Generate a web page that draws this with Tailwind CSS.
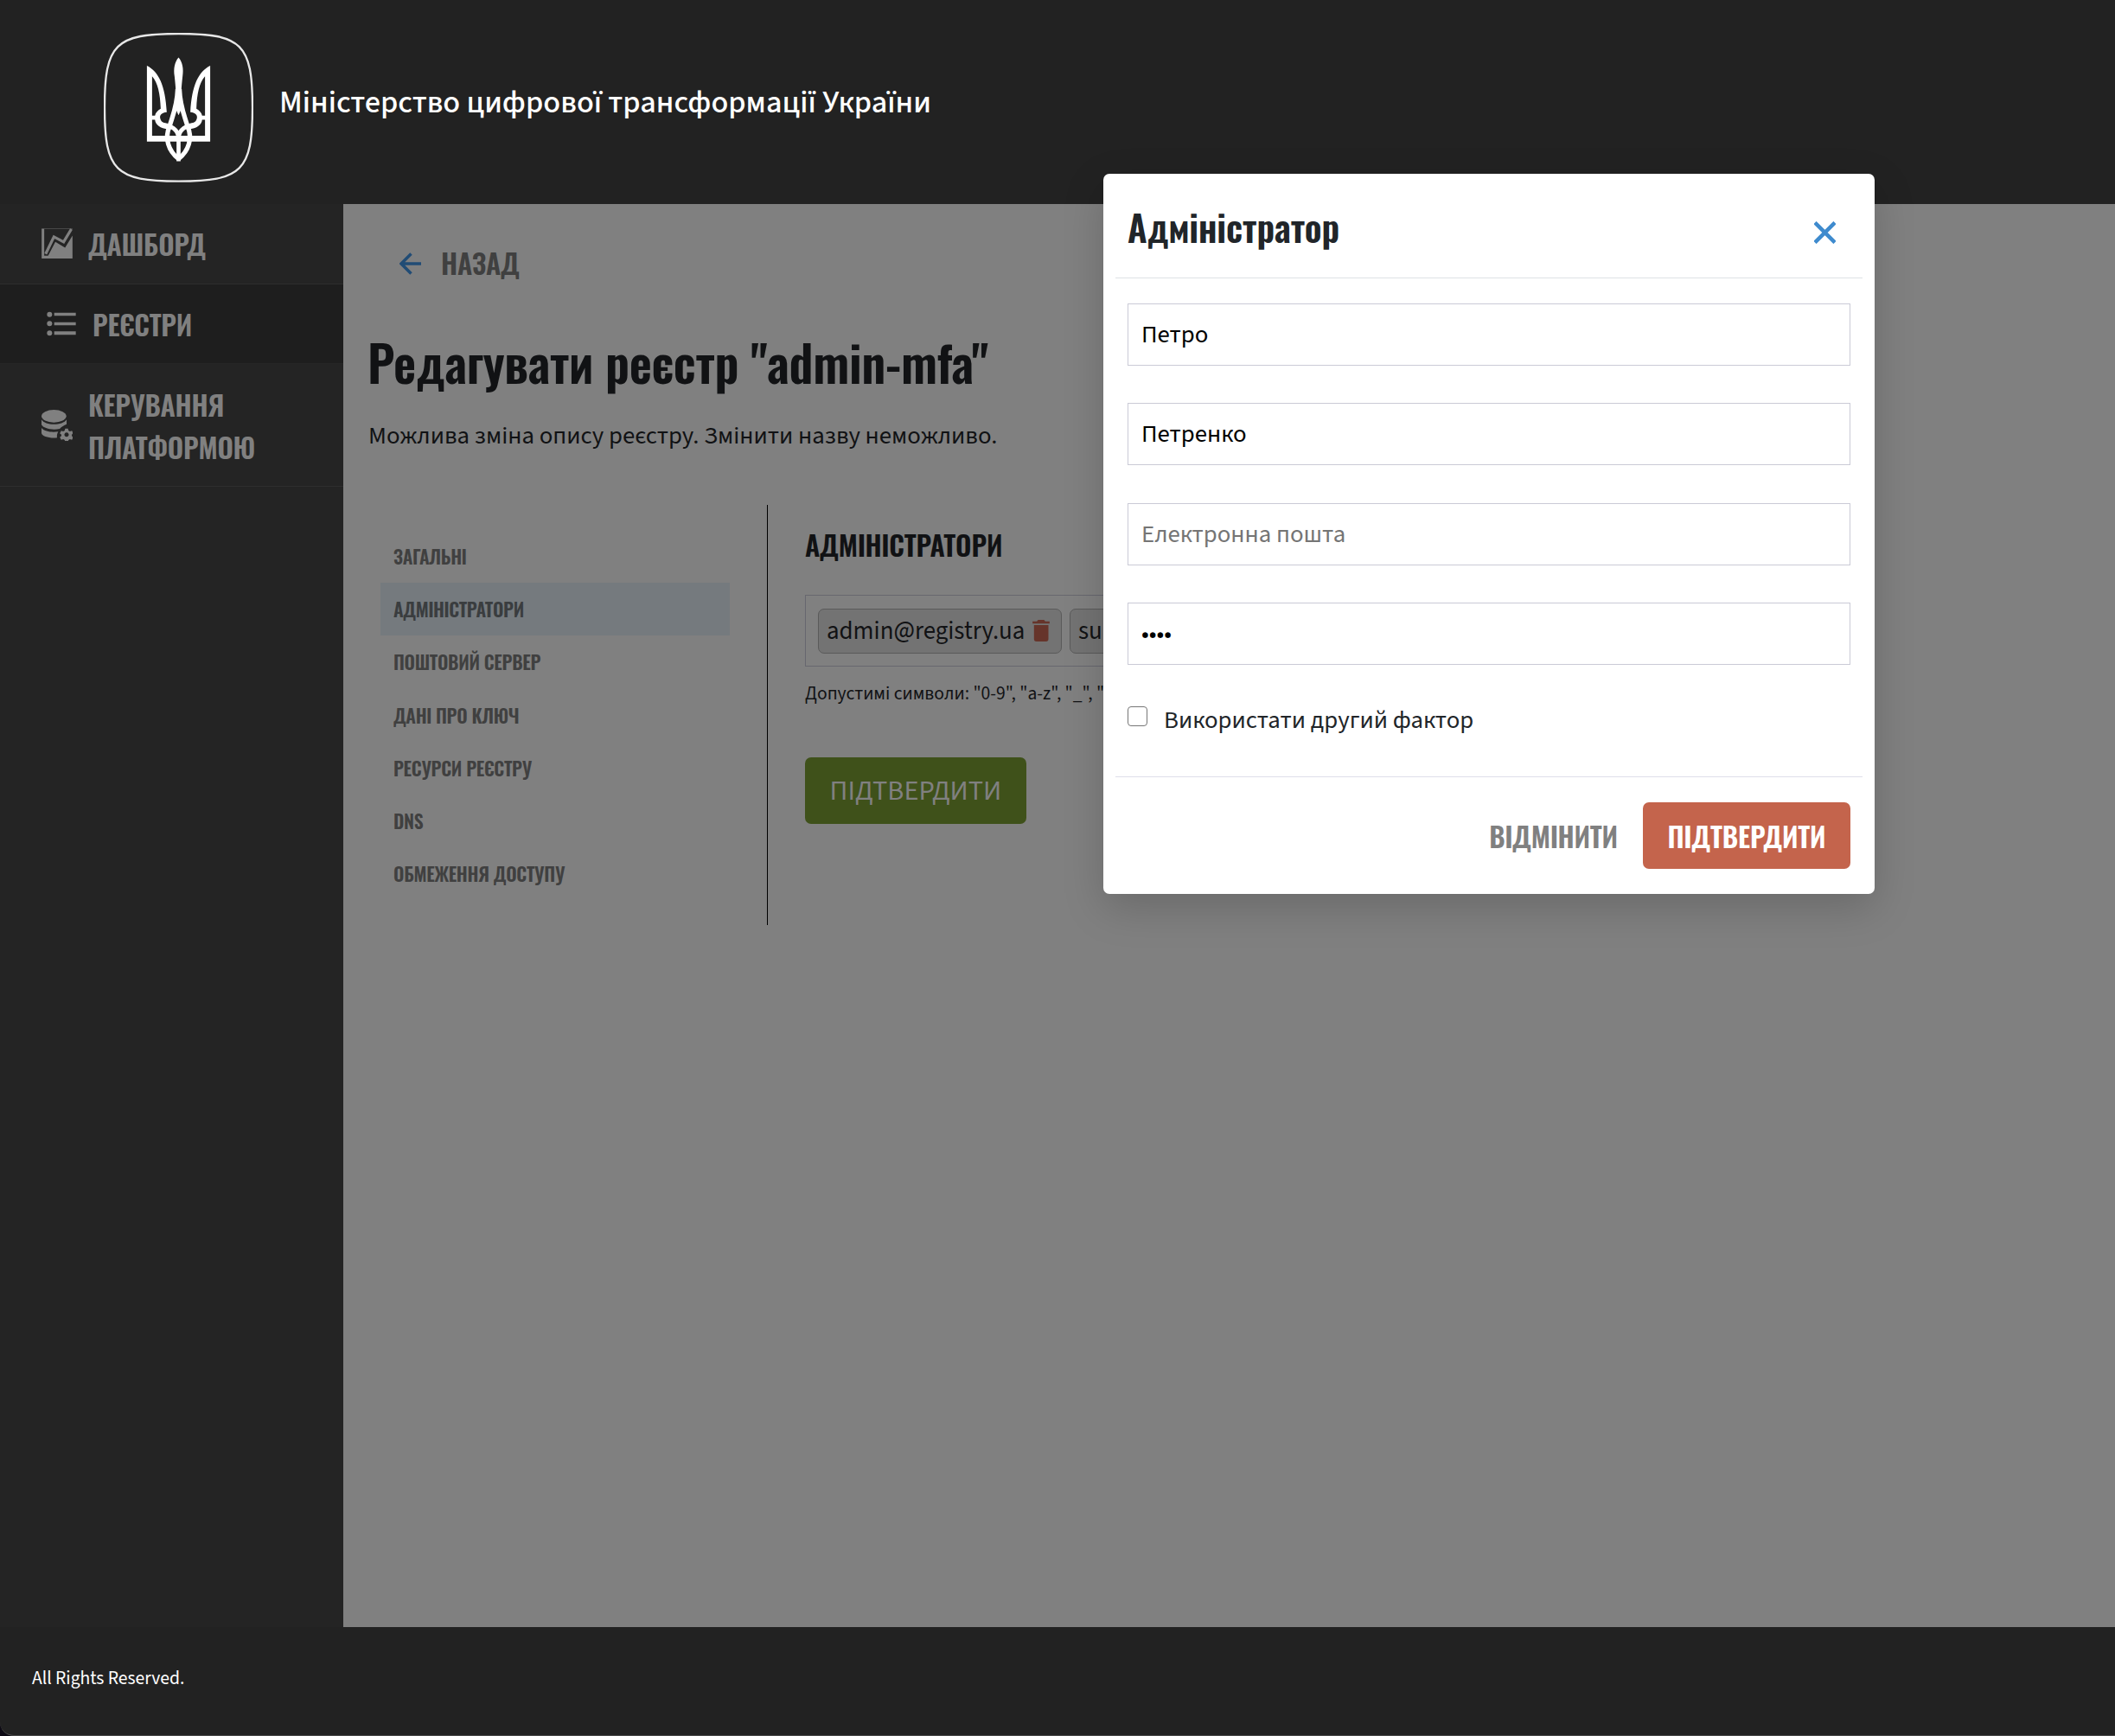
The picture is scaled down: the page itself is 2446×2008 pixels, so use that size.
<!DOCTYPE html>
<html lang="uk">
<head>
<meta charset="utf-8">
<title>Адміністратор</title>
<script src="https://cdn.jsdelivr.net/npm/@tailwindcss/browser@4"></script>
</head>
<body class="bg-[#0d0a14] font-['Source_Sans_3','Noto_Sans',sans-serif] w-[2446px] h-[2008px] overflow-hidden">
<div class="relative flex flex-col w-[2446px] h-[2008px] bg-[#222222] overflow-hidden rounded-bl-[16px] border-b border-[#4a4a4a]">

  <header class="flex h-[236px] shrink-0 pl-[120px] gap-[30px]">
    <svg class="mt-[38px] w-[173px] h-[173px]" viewBox="60 54 520 520" fill="none">
      <path d="M320 57C540 57 577 93 577 313C577 533 540 570 320 570C100 570 63 533 63 313C63 93 100 57 320 57Z" stroke="#e8e8e8" stroke-width="7"/>
      <g id="half">
        <path fill="#fff" fill-rule="evenodd" d="M210 168C250 188 274 235 279 330C262 332 254 340 256 350C258 364 270 370 290 371L286 389C255 386 240 374 238 356H228V412H320V432H210ZM228 205C248 228 256 265 258 318C248 324 240 332 238 342H228Z"/>
        <path d="M317 250C315 310 300 340 289 378C270 420 285 465 320 492" stroke="#fff" stroke-width="16"/>
        <path d="M265 374C295 376 316 390 320 415" stroke="#fff" stroke-width="15"/>
      </g>
      <use href="#half" transform="translate(640 0) scale(-1 1)"/>
      <path fill="#fff" d="M320 140C334 156 338 180 334 205C330 245 326 270 336 305L320 340L304 305C314 270 310 245 306 205C302 180 306 156 320 140ZM313 395H327V500H313Z"/>
    </svg>
    <div class="flex items-center pt-[2px] text-[36.4px] font-medium leading-[46px] text-white whitespace-nowrap">Міністерство цифрової трансформації України</div>
  </header>

  <div class="flex h-[1646px] shrink-0">
    <aside class="w-[397px] shrink-0 bg-[#242424] font-['Oswald','Open_Sans',sans-serif] font-semibold tracking-[-0.25px] text-[32px] leading-[49px] text-[#808080]">
      <a class="flex h-[93px] items-center gap-[18px] border-b border-[#2e2e2e] pb-[2px] pl-[48px]">
        <svg class="w-[36px] h-[35px]" viewBox="144 102 108 106" fill="#808080"><path d="M144 104h9v94h99v10h-108z"/><path d="M144 102h108v3h-108z" opacity=".4"/><path d="M158 192L187 132L221 150L248 105" fill="none" stroke="#808080" stroke-width="10"/><path d="M166 200L192 150L226 170L252 128V200Z"/></svg>
        <span>ДАШБОРД</span>
      </a>
      <a class="flex h-[92px] items-center gap-[19px] border-b border-[#262626] bg-[#1e1e1e] pl-[54px]">
        <svg class="w-[34px] h-[29px]" viewBox="160 393 102 87" fill="#808080"><circle cx="170" cy="404" r="9"/><circle cx="170" cy="436" r="9"/><circle cx="170" cy="469" r="9"/><path d="M186 398h75v11h-75zM186 431h75v11h-75zM186 463h75v12h-75z"/></svg>
        <span>РЕЄСТРИ</span>
      </a>
      <a class="flex h-[142px] items-center gap-[18px] border-b border-[#2e2e2e] pl-[48px]">
        <svg class="w-[36px] h-[36px]" viewBox="144 732 108 108" fill="#808080"><ellipse cx="187" cy="754" rx="43" ry="22"/><path d="M144 766C156 788 218 788 231 766V782C222 786 214 790 207 798C180 804 150 796 144 784Z"/><path d="M144 795C156 808 178 811 202 808C198 815 197 822 198 829C172 832 146 824 144 813Z"/><path fill-rule="evenodd" d="M226 797h10l1.500 7 5 3 7-2.500 5 9-5.500 4.500v5l5.500 4.500-5 9-7-2.500-5 3-1.500 7h-10l-1.500-7-5-3-7 2.500-5-9 5.500-4.500v-5l-5.500-4.500 5-9 7 2.500 5-3zM231 811a7.500 7.500 0 1 0 .01 0z"/></svg>
        <span>КЕРУВАННЯ<br>ПЛАТФОРМОЮ</span>
      </a>
    </aside>

    <main class="flex-1 bg-[#808080] text-[#111214] whitespace-nowrap">
      <div class="mt-[43px] ml-[65px] flex h-[49px] items-center gap-[23px] font-['Oswald','Open_Sans',sans-serif] text-[32px] font-semibold tracking-[-0.25px] leading-[49px] text-[#404040]">
        <svg class="mt-[3px] w-[25px] h-[26px]" viewBox="0 0 25 26" fill="none" stroke="#214c75" stroke-width="3.5"><path d="M25 13H2M13.500 1.500L2 13L13.500 24.500"/></svg>
        <span>НАЗАД</span>
      </div>
      <h1 class="mt-[48px] ml-[28px] font-['Oswald','Open_Sans',sans-serif] text-[57px] font-semibold tracking-[-0.3px] leading-[84px]">Редагувати реєстр "admin-mfa"</h1>
      <p class="mt-[24px] ml-[29px] text-[28.8px] leading-[42px]">Можлива зміна опису реєстру. Змінити назву неможливо.</p>

      <div class="mt-[58px] ml-[43px] flex h-[486px]">
        <nav class="mt-[29px] grid h-[428px] w-[404px] shrink-0 grid-rows-7 font-['Oswald','Open_Sans',sans-serif] text-[21.600px] font-semibold tracking-[-0.3px] text-[#404040]">
          <a class="flex items-center px-[15px]">ЗАГАЛЬНІ</a>
          <a class="flex items-center bg-[#757a7e] px-[15px] pb-px text-[#3a3d3f]">АДМІНІСТРАТОРИ</a>
          <a class="flex items-center px-[15px] pb-px">ПОШТОВИЙ СЕРВЕР</a>
          <a class="flex items-center px-[15px]">ДАНІ ПРО КЛЮЧ</a>
          <a class="flex items-center px-[15px]">РЕСУРСИ РЕЄСТРУ</a>
          <a class="flex items-center px-[15px]">DNS</a>
          <a class="flex items-center px-[15px]">ОБМЕЖЕННЯ ДОСТУПУ</a>
        </nav>
        <div class="ml-[43px] w-px shrink-0 bg-black"></div>
        <section class="ml-[43px] w-[1000px]">
          <h2 class="mt-[22px] font-['Oswald','Open_Sans',sans-serif] text-[32px] font-semibold tracking-[-0.1px] leading-[48px]">АДМІНІСТРАТОРИ</h2>
          <div class="mt-[34px] flex h-[83px] items-center gap-[9px] border border-[#67676f] pl-[14px] text-[28.9px]">
            <span class="flex h-[52px] w-[282px] items-center gap-[9px] rounded-[7px] border border-[#5a5a5a] bg-[#737373] pl-[9px]"><span class="pt-[2px]">admin@registry.ua</span>
              <svg class="w-[20px] h-[25px]" viewBox="882 441 59 75" fill="#66342a"><path d="M897 446l4-5h21l4 5h15v8h-59v-8zM887 459h50v48q0 9-8 9h-34q-8 0-8-9z"/></svg>
            </span>
            <span class="flex h-[52px] w-[282px] items-center rounded-[7px] border border-[#5a5a5a] bg-[#737373] pt-[2px] pl-[9px]">su</span>
          </div>
          <p class="mt-[16px] h-[32px] text-[21.600px] leading-[32px]">Допустимі символи: "0-9", "a-z", "_", "-"</p>
          <button class="mt-[57px] flex h-[77px] w-[256px] items-center justify-center rounded-[7px] bg-[#3f511a] pt-[2px] text-[32.4px] text-[#808080]">ПІДТВЕРДИТИ</button>
        </section>
      </div>
    </main>
  </div>

  <footer class="h-[126px] shrink-0 pt-[44px] pl-[37px] text-[21.600px] leading-[32px] text-white">All Rights Reserved.</footer>

  <div class="absolute top-[201px] left-[1276px] flex h-[833px] w-[892px] flex-col rounded-[7px] bg-white text-[28.8px] text-[#212529] shadow-[0_16px_48px_rgba(0,0,0,0.175)]">
    <div class="mx-[14px] flex h-[121px] shrink-0 justify-between border-b border-[#dee2e6] pr-[31px] pl-[14px]">
      <h2 class="mt-[30px] font-['Oswald','Open_Sans',sans-serif] text-[42px] font-semibold tracking-[-0.1px] leading-[62px]">Адміністратор</h2>
      <svg class="mt-[55px] w-[25px] h-[26px]" viewBox="0 0 25 26" stroke="#3f8bce" stroke-width="4.5" fill="none"><path d="M1 1.500L24 24.500M24 1.500L1 24.500"/></svg>
    </div>
    <div class="flex h-[418px] shrink-0 flex-col justify-between mt-[29px] mx-[28px] text-black">
      <input class="h-[72px] border border-[#cacad6] px-[15px] pt-[1px]" value="Петро">
      <input class="h-[72px] border border-[#cacad6] px-[15px] pt-[1px]" value="Петренко">
      <input class="h-[72px] border border-[#cacad6] px-[15px] pt-[2px] placeholder:text-[#757575]" placeholder="Електронна пошта">
      <input type="password" class="h-[72px] border border-[#cacad6] px-[15px] pt-[2px]" value="1234">
    </div>
    <label class="mt-[44px] ml-[28px] flex h-[42px] gap-[19px] leading-[42px]">
      <input type="checkbox" class="mt-[4px] size-[23px] appearance-none rounded-[4px] border-[1.5px] border-[#767676]">
      <span>Використати другий фактор</span>
    </label>
    <div class="mx-[14px] mt-[43px] flex items-start justify-end gap-[29px] border-t border-[#dfdfea] pt-[29px] pr-[14px] font-['Oswald','Open_Sans',sans-serif] text-[32px] font-semibold leading-[77px]">
      <button class="tracking-[-0.1px] text-[#808080]">ВІДМІНИТИ</button>
      <button class="w-[240px] rounded-[7px] bg-[#c4644c] text-white">ПІДТВЕРДИТИ</button>
    </div>
  </div>
</div>
</body>
</html>
